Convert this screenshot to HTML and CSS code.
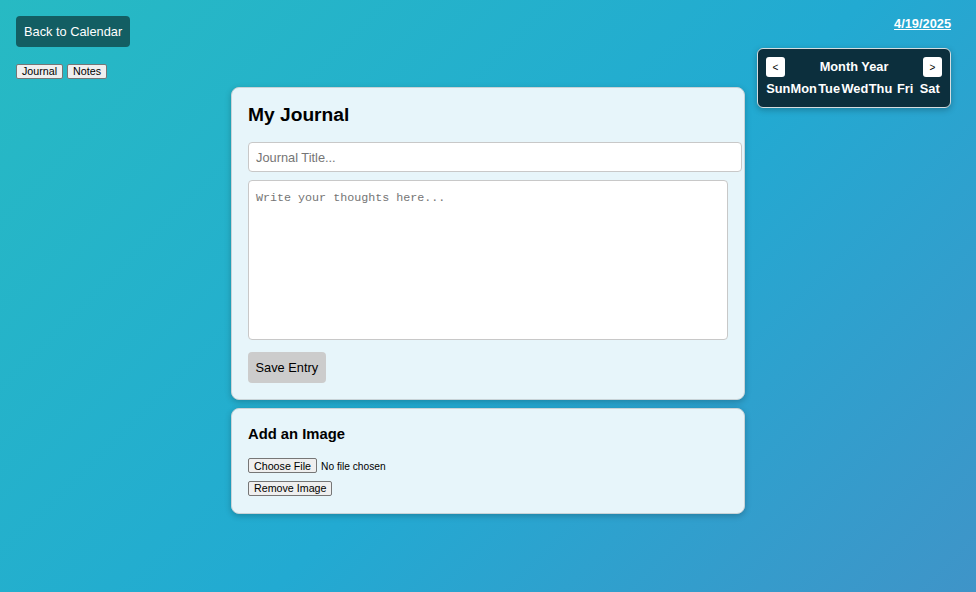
FILE: index.html
```html
<!DOCTYPE html>
<html lang="en">
<head>
<meta charset="utf-8">
<title>My Journal</title>
<link rel="stylesheet" href="styles.css">
</head>
<body>
<div class="page">
  <nav class="side">
    <button class="back-btn">Back to Calendar</button>
    <div class="tabs">
      <button class="tab">Journal</button>
      <button class="tab">Notes</button>
    </div>
  </nav>

  <main class="main">
    <section class="card journal">
      <h2 class="card-title">My Journal</h2>
      <input class="title-input" type="text" placeholder="Journal Title...">
      <textarea class="entry" placeholder="Write your thoughts here..."></textarea>
      <button class="save-btn">Save Entry</button>
    </section>
    <section class="card image-card">
      <h3 class="card-sub">Add an Image</h3>
      <input class="file-input" type="file">
      <button class="tab remove-btn">Remove Image</button>
    </section>
  </main>

  <aside class="right">
    <a class="date" href="#">4/19/2025</a>
    <div class="mini-cal">
      <div class="cal-head">
        <button class="cal-nav">&lt;</button>
        <span class="cal-month">Month Year</span>
        <button class="cal-nav">&gt;</button>
      </div>
      <div class="cal-days">
        <span>Sun</span><span>Mon</span><span>Tue</span><span>Wed</span><span>Thu</span><span>Fri</span><span>Sat</span>
      </div>
    </div>
  </aside>
</div>
</body>
</html>
```
FILE: styles.css
```css
* { box-sizing: border-box; }

html, body { height: 100%; }

body {
  margin: 0;
  font-family: "Liberation Sans", Arial, sans-serif;
  background: linear-gradient(135deg, #27bac3 0%, #22aad2 55%, #3f94c8 100%);
  min-height: 592px;
}

.page {
  display: grid;
  grid-template-columns: 1fr 514px 1fr;
  align-items: start;
  padding: 16px;
}

.side {
  display: flex;
  flex-direction: column;
  align-items: flex-start;
  gap: 17px;
}

.back-btn {
  height: 31px;
  padding: 0 8px;
  border: none;
  border-radius: 4px;
  background: #135e63;
  color: #fff;
  font-family: "Liberation Sans", Arial, sans-serif;
  font-size: 12.8px;
}

.tabs {
  display: flex;
  gap: 4px;
}

.tab {
  height: 15px;
  padding: 0 5px;
  border: 1px solid #767676;
  border-radius: 2px;
  background: #efefef;
  color: #000;
  font-family: "Liberation Sans", Arial, sans-serif;
  font-size: 10.7px;
  line-height: 13px;
}

.main {
  margin-top: 71px;
  display: flex;
  flex-direction: column;
  gap: 8px;
}

.card {
  background: #e7f5fa;
  border: 1px solid #c9d3d7;
  border-radius: 8px;
  padding: 16px;
  box-shadow: 0 2px 6px rgba(0, 0, 0, 0.22);
}

.card-title {
  margin: 0 0 16px;
  font-size: 19.2px;
  font-weight: bold;
  color: #000;
}

.title-input {
  display: block;
  width: 494px;
  height: 30px;
  padding: 0 7px;
  border: 1px solid #c8c8c8;
  border-radius: 4px;
  background: #fff;
  font-family: "Liberation Sans", Arial, sans-serif;
  font-size: 12.8px;
  color: #000;
}

.title-input::placeholder { color: #757575; }

.entry {
  display: block;
  width: 480px;
  height: 160px;
  margin: 8px 0 12px;
  padding: 10px 7px 8px;
  border: 1px solid #c8c8c8;
  border-radius: 4px;
  background: #fff;
  font-family: "Liberation Mono", "DejaVu Sans Mono", monospace;
  font-size: 11.7px;
  resize: none;
}

.entry::placeholder { color: #757575; }

.save-btn {
  display: block;
  height: 31px;
  padding: 0 7.5px;
  border: none;
  border-radius: 4px;
  background: #cccccc;
  color: #000;
  font-family: "Liberation Sans", Arial, sans-serif;
  font-size: 12.8px;
}

.card-sub {
  margin: 1px 0 16px;
  font-size: 14.8px;
  font-weight: bold;
  color: #000;
}

.file-input {
  display: block;
  height: 15px;
  font-family: "Liberation Sans", Arial, sans-serif;
  font-size: 10.2px;
  color: #000;
}

.file-input::file-selector-button {
  height: 15px;
  padding: 0 5px;
  margin-right: 4px;
  border: 1px solid #767676;
  border-radius: 2px;
  background: #efefef;
  font-size: 10.7px;
}

.remove-btn {
  display: block;
  margin-top: 8px;
  height: 15px;
}

.image-card {
  padding-bottom: 17px;
}

.right {
  display: flex;
  flex-direction: column;
  align-items: flex-end;
  padding-right: 9px;
  gap: 17px;
}

.date {
  color: #fff;
  font-weight: bold;
  font-size: 12.8px;
  text-decoration: underline;
}

.mini-cal {
  width: 194px;
  height: 60px;
  padding: 8px;
  background: #0c2f3d;
  border: 1px solid #d5dde0;
  border-radius: 6px;
  box-shadow: 0 2px 6px rgba(0, 0, 0, 0.25);
  color: #fff;
  font-weight: bold;
  font-size: 12.8px;
}

.cal-head {
  display: flex;
  justify-content: space-between;
  align-items: center;
  height: 20px;
}

.cal-nav {
  width: 19px;
  height: 20px;
  padding: 0;
  border: none;
  border-radius: 3px;
  background: #fff;
  color: #000;
  font-family: "Liberation Sans", Arial, sans-serif;
  font-size: 10px;
}

.cal-month { line-height: 20px; }

.cal-days {
  display: grid;
  grid-template-columns: repeat(7, 1fr);
  margin-top: 3px;
  line-height: 17px;
  text-align: center;
}
```
